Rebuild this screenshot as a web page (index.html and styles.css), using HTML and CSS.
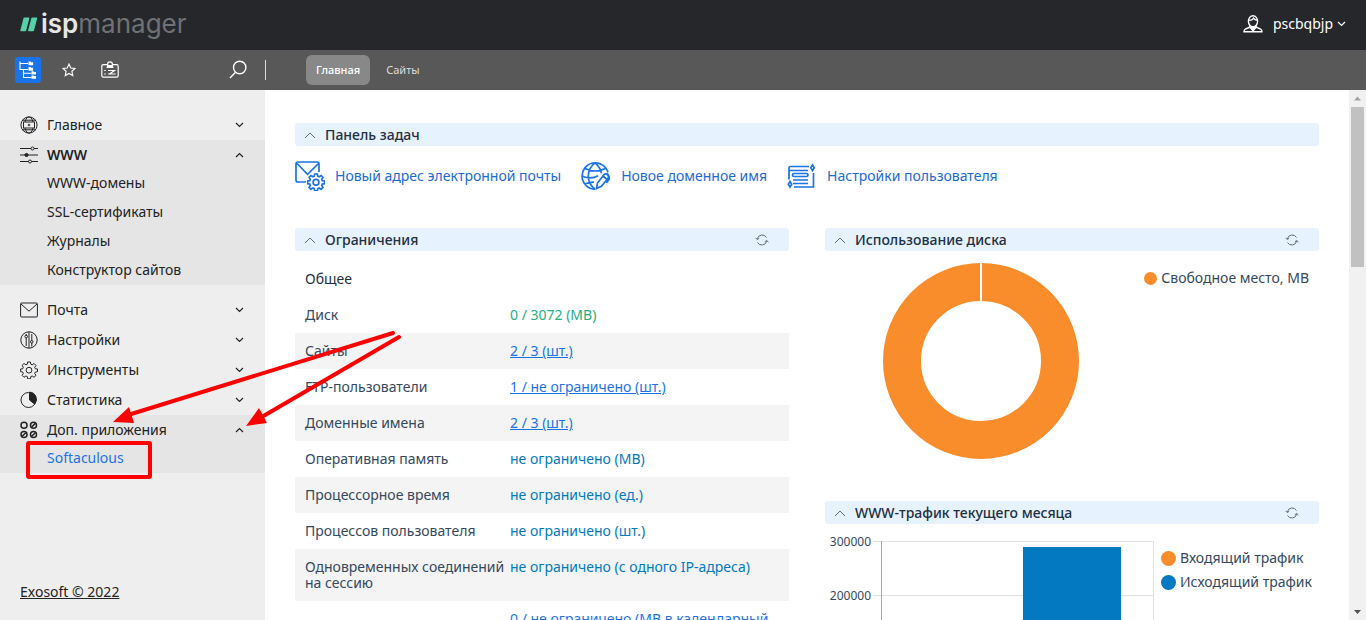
FILE: index.html
```html
<!DOCTYPE html>
<html lang="ru">
<head>
<meta charset="utf-8">
<title>ispmanager</title>
<link rel="stylesheet" href="styles.css">
</head>
<body>
<svg class="defs" aria-hidden="true">
  <symbol id="down" viewBox="0 0 9 6"><path d="M1 1l3.500 3.500L8 1"/></symbol>
  <symbol id="up" viewBox="0 0 9 6"><path d="M1 5l3.500-3.500L8 5"/></symbol>
  <symbol id="fold" viewBox="0 0 12 8"><path d="M1 7l5-5 5 5"/></symbol>
  <symbol id="reload" viewBox="0 0 14 12"><path d="M2.300 4.800A5 5 0 0 1 11.500 3.500M11.700 7.200A5 5 0 0 1 2.500 8.500M.500 3.800l1.700 1.700 2-1.200M13.500 8.200l-1.700-1.700-2 1.200"/></symbol>
  <symbol id="gear" viewBox="0 0 18 18"><path d="M7.600 1h2.800l.4 2.200 1.400.6 1.900-1.300 1.900 2-1.300 1.800.6 1.400 2.200.3v2.700l-2.200.4-.6 1.400 1.300 1.900-2 1.900-1.800-1.300-1.400.6-.4 2.200H7.600l-.3-2.200-1.400-.6-1.900 1.300-1.900-1.900 1.200-1.900-.5-1.400-2.200-.4V8l2.200-.3.5-1.400L2.100 4.400l1.900-1.900 1.900 1.300 1.400-.6z"/><circle cx="9" cy="9.200" r="2.900"/></symbol>
</svg>

<div class="app">
  <header class="top">
    <a class="logo" href="#" aria-label="ispmanager">
      <svg width="18" height="16" viewBox="0 0 18 16"><path fill="#56d1a8" d="M4.500 1.500h4.300q.8 0 .6.800L6.200 14.500q-.2.700-1 .7H.900q-.8 0-.6-.8L3.500 2.200q.2-.7 1-.7zM12.300 1.500h4.300q.8 0 .6.800L14 14.500q-.2.700-1 .7H8.700q-.8 0-.6-.8l3.200-12.200q.2-.7 1-.7z"/></svg>
      <span class="wordmark"><b>isp</b>manager</span>
    </a>
    <button class="user" type="button">
      <svg width="20" height="18" viewBox="0 0 20 18" fill="none" stroke="#fff" stroke-width="1.400"><ellipse cx="10" cy="6.300" rx="4.600" ry="5.500"/><path d="M5.800 5.300c2 .2 3.700-.6 4.700-2 1 1.300 2 1.800 3.800 2M7 10.500v1.700L2.500 14Q1 14.800 1 16.700h18q0-1.900-1.500-2.700L13 12.200v-1.700M7 12l3 3.500 3-3.500"/><path d="M7 12h6l-3 3.800z" fill="#fff"/></svg>
      <span>pscbqbjp</span>
      <svg class="chev" width="9" height="6"><use href="#down"/></svg>
    </button>
  </header>

  <nav class="bar">
    <div class="tools">
      <button class="tool on" type="button" aria-label="Меню">
        <svg width="18" height="18" viewBox="0 0 18 18" fill="none" stroke="#fff" stroke-width="1.100"><path d="M1 .500V8.500H9M1 2.500H9M4.500 8.500v8H12.500M4.500 12.200h8"/><path fill="#fff" stroke="none" d="M9.500.500h2l.6.800h2v3H9.500zM9.500 6h2l.6.800h2v3H9.500zM12.500 10.300h2l.6.600H17v2.600h-4.500zM12.500 14.500h2l.6.600H17v2.600h-4.500z"/></svg>
      </button>
      <button class="tool" type="button" aria-label="Избранное">
        <svg width="14" height="14" viewBox="0 0 16 16" fill="none" stroke="#fff" stroke-width="1.300"><path d="M8 1.200l2 4.500 4.900.5-3.600 3.300 1 4.900L8 12l-4.300 2.400 1-4.900L1.100 6.200 6 5.700z"/></svg>
      </button>
      <button class="tool" type="button" aria-label="Панель">
        <svg width="18" height="18" viewBox="0 0 18 18" fill="none" stroke="#fff" stroke-width="1.200"><path d="M6.300 3.600H2.500q-1.700 0-1.700 1.700v9.200q0 1.700 1.700 1.700h13q1.700 0 1.700-1.700V5.300q0-1.700-1.700-1.700h-3.800M6.200 6.300h5.600L11 4.600H7z"/><circle cx="9" cy="3.200" r="2.400"/><path d="M7 9.500h7.500M7 13h7.500M8.500 13l5-3.500M3.200 9.500h1.600M3.200 13h1.600"/></svg>
      </button>
      <button class="tool search" type="button" aria-label="Поиск">
        <svg width="18" height="20" viewBox="0 0 18 20" fill="none" stroke="#fff" stroke-width="1.400"><circle cx="10.700" cy="7.500" r="6.200"/><path d="M6.500 12.200L1 18"/></svg>
      </button>
    </div>
    <div class="tabs">
      <button class="tab on" type="button">Главная</button>
      <button class="tab" type="button">Сайты</button>
    </div>
  </nav>

  <div class="body">
    <aside class="side">
      <ul class="menu">
        <li><button class="head" type="button"><svg class="ico" viewBox="0 0 18 18"><circle cx="9" cy="9" r="8.100"/><ellipse cx="9" cy="9" rx="4.300" ry="8.100"/><path d="M2.500 4.200h13M2.500 13.800h13"/><rect x="3.500" y="6" width="11" height="6" fill="#eee"/><path d="M9 7.800v2.400M7.800 9h2.400"/></svg><span>Главное</span><svg class="chev" width="9" height="6"><use href="#down"/></svg></button></li>
        <li class="open spaced"><button class="head strong" type="button"><svg class="ico" viewBox="0 0 18 18"><path d="M0 2.500h11M14 2.500h4M0 9h18M0 15.500h8.500M11.500 15.500H18"/><circle cx="12.500" cy="2.500" r="1.500"/><circle cx="6.500" cy="9" r="1.600" fill="#222"/><circle cx="10" cy="15.500" r="1.500"/></svg><span>WWW</span><svg class="chev" width="9" height="6"><use href="#up"/></svg></button>
          <ul class="sub">
            <li><a href="#">WWW-домены</a></li>
            <li><a href="#">SSL-сертификаты</a></li>
            <li><a href="#">Журналы</a></li>
            <li><a href="#">Конструктор сайтов</a></li>
          </ul></li>
        <li><button class="head" type="button"><svg class="ico" viewBox="0 0 18 18"><rect x=".6" y="2" width="16.800" height="14" rx="1"/><path d="M1 3l8 7.200L17 3"/></svg><span>Почта</span><svg class="chev" width="9" height="6"><use href="#down"/></svg></button></li>
        <li><button class="head" type="button"><svg class="ico" viewBox="0 0 18 18"><circle cx="9" cy="9" r="8.200"/><path d="M6.200 7v8M9 1v16M11.800 3v6.500M11.800 12v3.500M6.200 3v2"/><circle cx="6.200" cy="5.600" r="1.300"/><circle cx="11.800" cy="10.800" r="1.300"/></svg><span>Настройки</span><svg class="chev" width="9" height="6"><use href="#down"/></svg></button></li>
        <li><button class="head" type="button"><svg class="ico"><use href="#gear"/></svg><span>Инструменты</span><svg class="chev" width="9" height="6"><use href="#down"/></svg></button></li>
        <li><button class="head" type="button"><svg class="ico" viewBox="0 0 18 18"><circle cx="8.500" cy="9" r="7.500"/><path fill="#222" d="M9.500 1.200A7 7 0 0 1 14.500 13L9.500 9z"/></svg><span>Статистика</span><svg class="chev" width="9" height="6"><use href="#down"/></svg></button></li>
        <li class="open"><button class="head" type="button"><svg class="ico two" viewBox="0 0 18 18"><circle cx="4" cy="4.200" r="3"/><circle cx="13.500" cy="4.200" r="3"/><circle cx="4" cy="13.500" r="3"/><circle cx="13.500" cy="13.500" r="3"/><path d="M11.700 6l3.600-3.600M2.200 15.300l3.600-3.600M11.700 15.300l3.600-3.600"/></svg><span>Доп. приложения</span><svg class="chev" width="9" height="6"><use href="#up"/></svg></button>
          <ul class="sub">
            <li><a class="current" href="#">Softaculous</a></li>
          </ul></li>
      </ul>
      <a class="copy" href="#">Exosoft © 2022</a>
    </aside>

    <main class="main">
      <section>
        <div class="bandhead"><button type="button" aria-label="Свернуть"><svg width="12" height="8"><use href="#fold"/></svg></button><h2>Панель задач</h2></div>
        <div class="quick">
          <a href="#"><svg width="30" height="30" viewBox="0 0 30 30"><path d="M11 21H3Q1 21 1 19V3q0-2 2-2h19q2 0 2 2v8M2 2.500l10.500 10.800L23.500 2.500"/><svg x="12" y="12" width="18" height="18"><use href="#gear"/></svg></svg><span>Новый адрес электронной почты</span></a>
          <a href="#"><svg width="30" height="30" viewBox="0 0 30 30"><path d="M27 11.500A13.200 13.200 0 1 0 14 28.200M14 1.800C5 9 5 21 14 28.200M14 1.800c4 3.500 6 7 6.500 10.500M4 7.500q10 5 20.500 0M1 15q9 4 16-.2M4 23q5-2 9-1.800"/><path d="M15.500 27.500l1-5.500 6.500-8.300q1.600-1.500 3.500 0 1.700 1.600.5 3.500l-6.600 8.200zM22 15l4 3.500M25.500 12.500q3 1.500 2.700 5.500l-2.700 4"/></svg><span>Новое доменное имя</span></a>
          <a href="#"><svg width="30" height="30" viewBox="0 0 30 30"><path d="M22 5.500H3.500Q2 5.500 2 7V18.500M2 9.500h19M26.500 12v14H7M6 22.500h15M6 19h15"/><rect x="5.500" y="12.500" width="15.500" height="3" rx="1.500"/><path d="M25.500 4l1.700 2.800-1.700 2.800-1.700-2.800zM3 20.500l1.700 2.800L3 26.100l-1.700-2.800z"/></svg><span>Настройки пользователя</span></a>
        </div>
      </section>

      <div class="cols">
        <section>
          <div class="bandhead"><button type="button" aria-label="Свернуть"><svg width="12" height="8"><use href="#fold"/></svg></button><h2>Ограничения</h2><button class="re" type="button" aria-label="Обновить"><svg width="14" height="12"><use href="#reload"/></svg></button></div>
          <table class="limits">
            <colgroup><col class="name"><col></colgroup>
            <tbody>
              <tr><th colspan="2" scope="rowgroup">Общее</th></tr>
              <tr><th scope="row">Диск</th><td class="ok">0 / 3072 (MB)</td></tr>
              <tr class="alt"><th scope="row">Сайты</th><td><a href="#">2 / 3 (шт.)</a></td></tr>
              <tr><th scope="row">FTP-пользователи</th><td><a href="#">1 / не ограничено (шт.)</a></td></tr>
              <tr class="alt"><th scope="row">Доменные имена</th><td><a href="#">2 / 3 (шт.)</a></td></tr>
              <tr><th scope="row">Оперативная память</th><td>не ограничено (MB)</td></tr>
              <tr class="alt"><th scope="row">Процессорное время</th><td>не ограничено (ед.)</td></tr>
              <tr><th scope="row">Процессов пользователя</th><td>не ограничено (шт.)</td></tr>
              <tr class="alt"><th scope="row">Одновременных соединений<br>на сессию</th><td>не ограничено (с одного IP-адреса)</td></tr>
              <tr><th scope="row"></th><td class="num">0 / не ограничено (MB в календарный</td></tr>
            </tbody>
          </table>
        </section>

        <div class="stack">
          <section class="disk">
            <div class="bandhead"><button type="button" aria-label="Свернуть"><svg width="12" height="8"><use href="#fold"/></svg></button><h2>Использование диска</h2><button class="re" type="button" aria-label="Обновить"><svg width="14" height="12"><use href="#reload"/></svg></button></div>
            <div class="donut">
              <svg width="198" height="198" viewBox="0 0 198 198"><circle cx="99" cy="99" r="79" fill="none" stroke="#f98c2b" stroke-width="38"/><path d="M99 0v42" stroke="#fff" stroke-width="2"/></svg>
              <ul class="legend small"><li><i class="orange"></i>Свободное место, MB</li></ul>
            </div>
          </section>
          <section>
            <div class="bandhead"><button type="button" aria-label="Свернуть"><svg width="12" height="8"><use href="#fold"/></svg></button><h2>WWW-трафик текущего месяца</h2><button class="re" type="button" aria-label="Обновить"><svg width="14" height="12"><use href="#reload"/></svg></button></div>
            <div class="traffic">
              <svg width="329" height="90" viewBox="0 0 329 90"><path fill="none" stroke="#e1e1e1" d="M48 7.500H328.500V90M48 61.500H328"/><path stroke="#a8a8a8" d="M56.500 7v83"/><path fill="#0279c1" d="M198 13h98v77h-98z"/><g class="axis"><text x="46" y="12">300000</text><text x="46" y="66">200000</text></g></svg>
              <ul class="legend"><li><i class="orange"></i>Входящий трафик</li><li><i class="blue"></i>Исходящий трафик</li></ul>
            </div>
          </section>
        </div>
      </div>
    </main>

    <div class="scroll" aria-hidden="true">
      <svg width="17" height="17"><path fill="#a3a3a3" d="M5 10.500l3.500-4 3.500 4z"/></svg>
      <div class="thumb"></div>
      <svg width="17" height="17"><path fill="#505050" d="M5 7l3.500 4L12 7z"/></svg>
    </div>
  </div>
</div>

<svg class="marks" width="420" height="500" aria-hidden="true">
  <rect x="28" y="443" width="122" height="34" rx="1" fill="none" stroke="red" stroke-width="4"/>
  <path d="M393 333L128 415M399 337L260 418" stroke="red" stroke-width="4" stroke-linecap="round"/>
  <path fill="red" d="M113 422l16-15 5 16zM246 426l13-18 8 15z"/>
</svg>
</body>
</html>
```
FILE: styles.css
```css
* { box-sizing: border-box; }

body {
  margin: 0;
  overflow: hidden;
  font: 14px/16px "Noto Sans", "Open Sans", sans-serif;
  color: #222;
  background: #fff;
}

button {
  border: 0;
  padding: 0;
  background: none;
  font: inherit;
  color: inherit;
}

ul { list-style: none; margin: 0; padding: 0; }
svg { flex: none; display: block; }
.defs { position: absolute; width: 0; height: 0; }

.app { display: flex; flex-direction: column; height: 100vh; }

.top {
  flex: none;
  display: flex;
  align-items: center;
  justify-content: space-between;
  height: 50px;
  padding: 0 20px 2px;
  background: #26272b;
  color: #fff;
}

.logo { display: flex; align-items: center; gap: 3px; text-decoration: none; }
.wordmark { font: 26px/44px Inter, sans-serif; color: #707175; }
.wordmark b { font-weight: 600; color: #e6e6e6; }

.user { display: flex; align-items: center; gap: 10px; }
.user .chev { margin-left: -6px; stroke: #fff; }

.chev { fill: none; stroke: #222; stroke-width: 1.2; }

.bar {
  flex: none;
  display: flex;
  align-items: center;
  height: 40px;
  background: #585858;
  color: #ddd;
}

.tools {
  display: flex;
  align-items: center;
  gap: 15px;
  width: 266px;
  height: 20px;
  padding: 0 18px 0 15px;
  border-right: 1px solid #ddd;
}

.tool { display: grid; place-items: center; width: 26px; height: 26px; border-radius: 3px; }
.tool.on { background: #1a73e8; }
.tool.search { width: 18px; margin-left: auto; }

.tabs { display: flex; padding-left: 40px; }
.tab { height: 30px; padding: 0 10px; margin-right: 6px; border-radius: 6px; font-size: 11px; }
.tab.on { background: #888; color: #fff; font-weight: 500; }

.body { flex: 1; display: flex; min-height: 0; }

.side {
  flex: none;
  display: flex;
  flex-direction: column;
  justify-content: space-between;
  width: 265px;
  padding: 20px 0;
  background: #eee;
}

.head {
  display: flex;
  align-items: center;
  gap: 9px;
  width: 100%;
  height: 30px;
  padding: 0 21px 0 20px;
  text-align: left;
}
.head .chev { margin-left: auto; }
.strong { font-weight: 600; }
.ico { width: 18px; height: 18px; fill: none; stroke: #222; }
.two { stroke-width: 1.5; }

.open { background: #e5e5e5; }
.open > .head { height: 29px; }
.spaced { margin-bottom: 10px; }
.sub a { display: block; padding: 6px 20px 7px 47px; color: #222; text-decoration: none; }
.sub .current { color: #1a73e8; }
.copy { margin-left: 20px; color: #222; align-self: flex-start; }

.main { flex: 1; min-width: 0; overflow: hidden; padding: 33px 30px 0; }

.bandhead {
  display: flex;
  align-items: center;
  gap: 9px;
  height: 23px;
  padding: 0 20px 0 9px;
  border-radius: 3px;
  background: #e7f2ff;
  color: #22303f;
}
.bandhead h2 { margin: 0; font-size: 14px; font-weight: 500; }
.bandhead svg { fill: none; stroke: #5b6b7c; }
.re { margin-left: auto; }

.quick { display: flex; gap: 20px; padding: 15px 0 37px; }
.quick a { display: flex; align-items: center; gap: 10px; color: #1a6ad8; text-decoration: none; }
.quick svg { fill: none; stroke: #1a73e8; stroke-width: 1.7; }

.cols { display: grid; grid-template-columns: 1fr 1fr; gap: 36px; }

.limits { width: 100%; margin-top: 10px; border-collapse: collapse; table-layout: fixed; }
.limits .name { width: 205px; }
.limits th, .limits td { padding: 10px 0 10px 10px; text-align: left; vertical-align: top; font-weight: 400; white-space: nowrap; }
.limits th { color: #34495e; }
.limits tr:first-child th { color: #22303f; }
.limits td { color: #0279c1; }
.limits a, .limits .num { color: #1a73e8; }
.limits .ok { color: #27ae82; }
.alt { background: #f4f4f4; }

.disk { min-height: 273px; }
.donut { display: flex; justify-content: space-between; padding: 11px 10px 0 57px; }
.traffic { display: flex; gap: 7px; padding-top: 10px; }

.legend { color: #34495e; white-space: nowrap; }
.legend li { display: flex; align-items: center; gap: 4px; height: 24px; }
.legend i { width: 15px; height: 15px; border-radius: 50%; }
.small { padding-top: 4px; }
.small i { width: 13px; height: 13px; }
.traffic .legend { padding-top: 12px; }
.orange { background: #f98c2b; }
.blue { background: #0279c1; }
.axis { font-size: 12px; text-anchor: end; fill: #34495e; }

.scroll { flex: none; display: flex; flex-direction: column; width: 17px; background: #f1f1f1; }
.thumb { height: 160px; margin: 0 2px auto; background: #c1c1c1; }

.marks { position: absolute; left: 0; top: 0; pointer-events: none; }
```
